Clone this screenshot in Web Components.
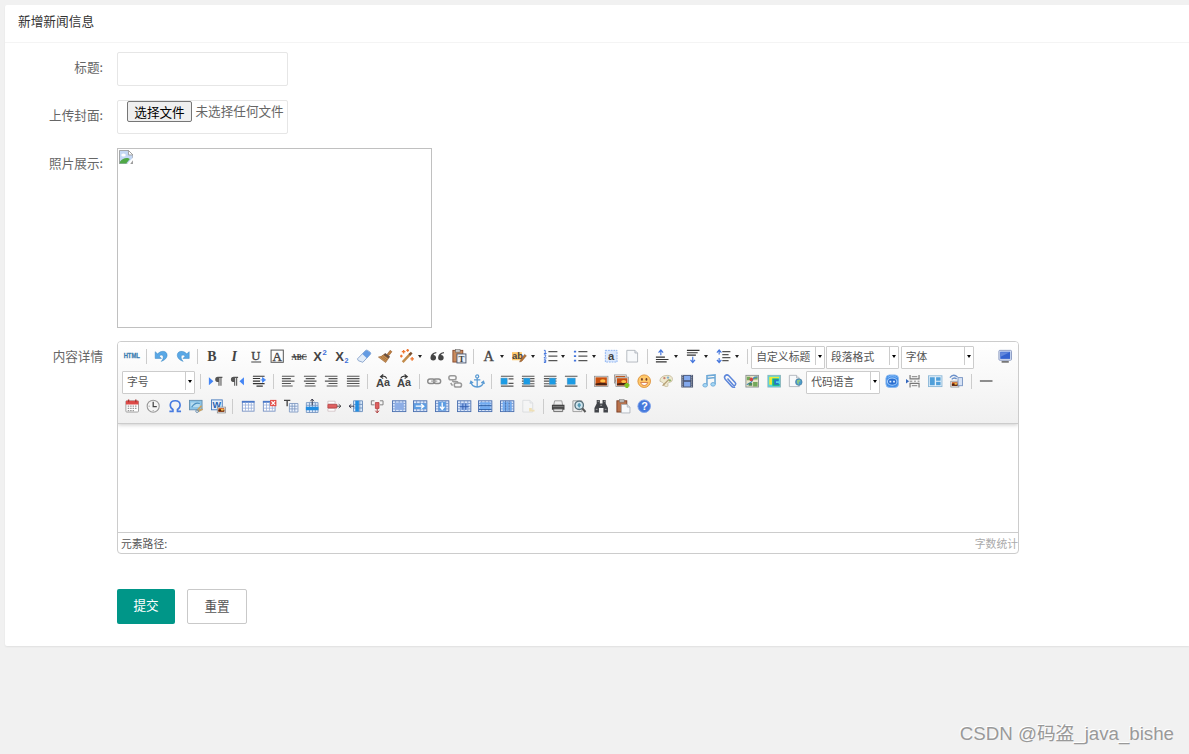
<!DOCTYPE html>
<html lang="zh-CN">
<head>
<meta charset="utf-8">
<title>新增新闻信息</title>
<style>
    html, body {
        margin: 0;
        height: 100%;
        overflow: hidden;
    }

    body {
        background: #f1f1f1;
        color: #666;
        font: 12.6px/20px "Noto Sans CJK SC", sans-serif;
    }
</style>
</head>
<body>
<news-page></news-page>

<script>
// 工具栏图标，全部画在 16x16 的画布上
const lines = (rows, color = '#555') => rows.map(([x, y, w]) => `<path d="M${x} ${y}h${w}" stroke="${color}" stroke-width="1.3"/>`).join('');
const letter = (t, x, y, size, extra = '') => `<text x="${x}" y="${y}" font-size="${size}" fill="#444" ${extra}>${t}</text>`;
const serif = 'font-family="Liberation Serif" font-weight="bold"';
const thin = 'font-family="Liberation Serif" stroke="#444" stroke-width=".4"';
const sans = 'font-family="Liberation Sans" font-weight="bold"';
const grid = (fill = '#fff', head = '#4a79c9') => `
    <rect x="1.5" y="2.5" width="13" height="11" fill="${fill}" stroke="#7590c2"/>
    <path d="M1 3.2h14" stroke="${head}" stroke-width="2"/>
    <path d="M2 6.7h12M2 10.2h12M5 4v9M8.3 4v9M11.5 4v9" stroke="#8fa9d8" stroke-width=".8"/>`;
const cells = inner => `
    <rect x=".6" y="2" width="14.8" height="12" fill="#d9e6fa" stroke="#4a6fae" stroke-width="1"/>
    <path d="M1 5h14M1 8h14M1 11h14M4 2v12M8 2v12M12 2v12" stroke="#6588c4" stroke-width=".8"/>${inner}`;
const photo = (x, y, w, h) => `
    <rect x="${x}" y="${y}" width="${w}" height="${h}" fill="#eee" stroke="#888" stroke-width=".8"/>
    <rect x="${x + 1.2}" y="${y + 1.2}" width="${w - 2.4}" height="${h - 2.4}" fill="#c9500f"/>
    <path d="M${x + 1.2} ${y + h - 1.5}v-2l${w / 2} -1l${w / 2 - 2.4} 1v2z" fill="#4c2213"/>
    <ellipse cx="${x + w * .62}" cy="${y + h * .45}" rx="${w * .2}" ry="${h * .16}" fill="#ffc04a"/>`;
const float = (x, w, rows) => `${lines(rows)}<rect x="${x}" y="4.500" width="${w}" height="7" fill="#1b9be4" stroke="#6b9bb8" stroke-width=".5"/>`;
const sheet = (x, y, w, h) => `<path d="M${x} ${y}h${w - 3}l3 3v${h - 3}h-${w}z" fill="#f7f9fb" stroke="#a7adb5" stroke-width=".9"/><path d="M${x + w - 3} ${y}v3h3" fill="#dce2e8" stroke="#a7adb5" stroke-width=".8"/>`;

const ICONS = {
    html: `<text x="-1.5" y="10.4" font-size="7" fill="#3e7fb1" stroke="#3e7fb1" stroke-width=".3" ${sans} textLength="18" lengthAdjust="spacingAndGlyphs">HTML</text>`,
    undo: `<path d="M1.3 3v7.5h7L5.9 8c1.7-2 4.4-1.4 4.4 1 0 1.8-.9 3.3-2.3 4.8 4.4-1.4 6.6-4.2 6.6-6.8C14.6 2 8.1 1 4 5.4z" fill="#5aa8e6" stroke="#2f7fbe" stroke-width=".5"/>`,
    redo: `<path d="M14.7 3v7.5h-7L10.1 8c-1.7-2-4.4-1.4-4.4 1 0 1.8.9 3.3 2.3 4.8C3.6 12.4 1.4 9.6 1.4 7 1.4 2 7.9 1 12 5.4z" fill="#5aa8e6" stroke="#2f7fbe" stroke-width=".5"/>`,
    bold: letter('B', 2.6, 13, 15.5, serif),
    italic: letter('I', 5, 13, 15.5, `${serif} font-style="italic"`),
    underline: letter('U', 2.6, 12, 14, thin) + '<path d="M2.5 14.5h11" stroke="#444" stroke-width="1.2"/>',
    fontborder: '<rect x="1.2" y="1.2" width="13.6" height="13.6" fill="none" stroke="#555" stroke-width="1.1"/>' + letter('A', 2.8, 13, 14.5, thin),
    strike: `<text x="-.5" y="12" font-size="10" fill="#444" ${serif} textLength="17" lengthAdjust="spacingAndGlyphs">ABC</text><path d="M-.5 8.7h17" stroke="#333" stroke-width="1.2"/>`,
    sup: letter('X', .2, 13, 14.5, sans) + '<text x="10.5" y="6.8" font-size="8.5" fill="#3b6fd8" font-family="Liberation Sans" font-weight="bold">2</text>',
    sub: letter('X', .2, 13, 14.5, sans) + '<text x="10.5" y="15.5" font-size="8" fill="#3b6fd8" font-family="Liberation Sans" font-weight="bold">2</text>',
    eraser: '<path d="M.5 11L9.500 1.700Q10.500.7 12 1.700l2.800 2q1 1 0 2.200L6.500 14.800 1.500 13z" fill="#e3edf9" stroke="#86a2cb"/><path d="M6 5.500L9.700 1.800q.8-.7 2 .1l3 2.100q1 .8 0 2L11 10.200z" fill="#649be2"/>',
    broom: '<path d="M10 6l3.500-4.500 2 1.500L12 7.500z" fill="#c18140" stroke="#8d5427" stroke-width=".6"/><path d="M8 4.500l5.500 4-2 2.300L5.500 7z" fill="#6a5140"/><path d="M6 6.500l5.500 4L8.500 15 .5 9q3.500-.3 5.500-2.500z" fill="#c89255" stroke="#955b28" stroke-width=".7"/><path d="M3.500 9l5 4M5 8l5 4" stroke="#8d5427" stroke-width=".6"/>',
    wand: '<path d="M3 14.500l8.500-9" stroke="#c28b4a" stroke-width="2.800"/><path d="M10.500 6.500L13 4" stroke="#78502f" stroke-width="2.800"/><path d="M4 1v4M2 3h4M13.500 9v4M11.500 11h4M1.500 6.500v3M0 8h3M8.500 0v3M7 1.500h3" stroke="#ef7630" stroke-width="1.500"/>',
    quote: '<path d="M7 3.300Q.5 4.500.5 9.700a3.100 3.100 0 1 0 3.200-3.100Q4.300 5.200 7 4.800zM15.500 3.300Q9 4.500 9 9.700a3.100 3.100 0 1 0 3.200-3.100q.6-1.400 3.300-1.800z" fill="#444"/>',
    pastetext: '<rect x="1" y="1.500" width="11" height="13" fill="#c98a5c" stroke="#85492d"/><rect x="4" y=".5" width="5" height="3" fill="#ccc" stroke="#666" stroke-width=".6"/><rect x="5.500" y="5.500" width="10" height="10" fill="#edf1f7" stroke="#47546b"/>' + letter('T', 7.2, 14.2, 10, serif),
    color: letter('A', 1.6, 13, 16, thin),
    highlight: '<rect x="0" y="3.500" width="11" height="9" fill="#ffc968"/>' + letter('ab', 0, 11.5, 10.5, sans) + '<path d="M9 13l5-7 2 1.500-5 6-2.500 1z" fill="#ba7532" stroke="#764628" stroke-width=".5"/>',
    ol: lines([[6, 3, 10], [6, 8, 10], [6, 13, 10]]) + '<path d="M1 1.500h1.500V5M1 5h3M1 6.500h2V8L1 10h3M1 12h2v3H1M1 13.500h2" stroke="#4475dc" fill="none" stroke-width="1.100"/>',
    ul: lines([[6, 3, 10], [6, 8, 10], [6, 13, 10]]) + '<path d="M1 2h2.500v2H1zM1 7h2.500v2H1zM1 12h2.500v2H1z" fill="#4475dc"/>',
    selectall: '<rect x="1.500" y="1.500" width="13" height="13" fill="#dce9fd" stroke="#87aff0" stroke-dasharray="2 1"/>' + letter('a', 4.5, 12, 12.5, sans),
    clear: sheet(2, 1.5, 12, 13),
    rowtop: lines([[1, 9, 10], [1, 11.7, 14], [1, 14.4, 12]], '#333') + '<path d="M6.500 7V1M4 4l2.500-3L9 4" fill="none" stroke="#4475dc" stroke-width="1.300"/>',
    rowbottom: lines([[1, 1.5, 14], [1, 4.2, 12], [1, 6.9, 10]], '#333') + '<path d="M7.500 8.500v6M5 12l2.500 3 2.500-3" fill="none" stroke="#4475dc" stroke-width="1.300"/>',
    lineheight: lines([[7, 3, 9], [7, 6.3, 7], [7, 9.6, 9], [7, 13, 7]]) + '<path d="M3.500 1v5M3.500 10v5M1 4l2.500-3L6 4M1 12l2.500 3L6 12" fill="none" stroke="#4475dc" stroke-width="1.300"/>',
    screen: '<rect x="1" y="1.500" width="14" height="11" rx="1" fill="#dce4f5" stroke="#8796bd"/><rect x="2.500" y="3" width="11" height="8" fill="#3563cf"/><path d="M3 3.500h10l-10 5z" fill="#6388dc"/><path d="M4 14.300h8" stroke="#777" stroke-width="2"/>',
    ltr: '<path d="M1 3.500v9L6 8z" fill="#4385f5"/><path d="M11 3h5v1.500h-1V13h-1.200V4.500h-1V13h-1.200V9Q8 9 8 6t3-3z" fill="#555"/>',
    rtl: '<path d="M15.500 3.500v9L10.500 8z" fill="#4385f5"/><path d="M4 3h5v1.500H8V13H6.800V4.500h-1V13H4.600V9Q1 9 1 6t3-3z" fill="#555"/>',
    indent: lines([[1, 2.5, 13], [1, 5, 8], [1, 8, 8], [1, 10.7, 13], [5, 13.5, 7]], '#333') + '<path d="M9.500 6.600H12M11.700 4v5.200L15 6.600z" fill="#4385f5" stroke="#4385f5"/>',
    left: lines([[1, 2.5, 14], [1, 5.2, 10], [1, 7.9, 14], [1, 10.6, 10], [1, 13.3, 12]]),
    center: lines([[1, 2.5, 14], [3, 5.2, 10], [1, 7.9, 14], [3, 10.6, 10], [2, 13.3, 12]]),
    right: lines([[1, 2.5, 14], [5, 5.2, 10], [1, 7.9, 14], [5, 10.6, 10], [3, 13.3, 12]]),
    justify: lines([[1, 2.5, 14], [1, 5.2, 14], [1, 7.9, 14], [1, 10.6, 14], [1, 13.3, 14]]),
    upper: letter('A', 0, 15, 12.5, sans) + letter('a', 9, 13, 12, sans) + '<path d="M12 5Q10 1 5.500 3M8 .5L5 3l3 2" fill="none" stroke="#333" stroke-width="1.200"/>',
    lower: letter('A', 0, 15, 12.5, sans) + letter('a', 9, 13, 12, sans) + '<path d="M4 5Q6 1 11 3M8.500 .5l3 2.500-3 2" fill="none" stroke="#333" stroke-width="1.200"/>',
    link: '<rect x=".8" y="5.500" width="8" height="5" rx="2.500" fill="none" stroke="#8b8b8b" stroke-width="1.600"/><rect x="7.200" y="5.500" width="8" height="5" rx="2.500" fill="none" stroke="#8b8b8b" stroke-width="1.600"/><path d="M4.500 8h7" stroke="#aaa" stroke-width="1.500"/>',
    unlink: '<g fill="none" stroke="#999" stroke-width="1.700"><rect x="1" y="2" width="8" height="4.500" rx="2"/><rect x="7" y="10" width="8" height="4.500" rx="2"/><path d="M5 7q0 2 3 1.500t3 1.500M3 10l2 3"/></g>',
    anchor: '<g fill="none" stroke="#5b9bd3" stroke-width="1.400"><circle cx="8" cy="2.700" r="1.700"/><path d="M8 4.500V14M4.500 6.500h7M1 8.500q.5 5.500 7 6 6.500-.5 7-6M0 11l1-3 2.500 2M16 11l-1-3-2.500 2"/></g>',
    floatnone: float(1, 7, [[1, 2.5, 14], [9.5, 5.5, 5.5], [9.5, 10.5, 5.5], [1, 13.5, 14]]),
    floatleft: float(3, 7, [[1, 2.5, 14], [1, 5.2, 14], [1, 8, 14], [1, 10.8, 14], [1, 13.5, 14]]),
    floatright: float(7, 7, [[1, 2.5, 14], [1, 5.2, 14], [1, 8, 14], [1, 10.8, 14], [1, 13.5, 14]]),
    floatcenter: float(3.5, 9, [[1, 2.5, 14], [1, 13.5, 14]]),
    image: photo(.5, 2.5, 15, 11.5),
    images: photo(-.5, 1, 13, 9) + photo(1, 3.5, 14, 10.5) + '<path d="M10.500 12.500h5.500M13.200 10v5.500" stroke="#80c425" stroke-width="3"/>',
    emotion: '<circle cx="8" cy="8" r="7" fill="#ffc96b" stroke="#dd8e37"/><ellipse cx="5.500" cy="6" rx="1" ry="1.500" fill="#74412a"/><ellipse cx="10.500" cy="6" rx="1" ry="1.500" fill="#74412a"/><path d="M4 9.500h8q-1 3.300-4 3.300T4 9.500z" fill="#fff" stroke="#cb5f27" stroke-width=".8"/>',
    scrawl: '<path d="M1 8q0-6 8-6.500 6 0 6 4.500 0 3-4 3.500-2 .5-1 3 .5 1.500-2 1.500-3 0-2.500-3Q4 9 1 8z" fill="#eee9cf" stroke="#c8bea2"/><circle cx="6" cy="4.500" r="1.300" fill="#c98272"/><circle cx="10" cy="4" r="1.300" fill="#82afcf"/><circle cx="12" cy="7" r="1.300" fill="#91b46b"/><path d="M4 13l7-7" stroke="#b7a077" stroke-width="1.500"/>',
    video: '<rect x="1.500" y="1" width="13" height="14" fill="#45516d"/><path d="M4.500 2h7v5h-7zM4.500 8.500h7V14h-7z" fill="#83a9ed"/><path d="M3 1.500v13M13 1.500v13" stroke="#eee" stroke-dasharray="1 1.300"/>',
    music: '<path d="M5.500 12V2l9-1v10M5.500 5l9-1" fill="none" stroke="#6da8d6" stroke-width="1.700"/><ellipse cx="3.500" cy="12.500" rx="2.500" ry="2" fill="#a5d7f5" stroke="#6da8d6"/><ellipse cx="12.300" cy="11.500" rx="2.500" ry="2" fill="#a5d7f5" stroke="#6da8d6"/>',
    attach: '<path d="M5 5l6 7q1.500 1.500 2.700.3 1.100-1.200-.2-2.800L6.500 2Q4.500 0 2.500 1.800.8 3.600 2.500 5.800L9 13q2 2.500 4.500 1.500" fill="none" stroke="#5c86da" stroke-width="1.700"/>',
    map: '<rect x="1" y="1.500" width="14" height="13" fill="#e9e6c8" stroke="#8a8f91"/><path d="M2 3h4v4H2zM9 9h5v5H9zM10 3h4v3h-4z" fill="#75a85c"/><path d="M2 12l5-3 3-5 4-1" fill="none" stroke="#488ac0" stroke-width="1.300"/><circle cx="7" cy="6" r="2" fill="#d24444"/><path d="M4 10h4v3H4z" fill="#4f8759"/>',
    gmap: '<rect x="1" y="1.500" width="14" height="13" fill="#53d4e6" stroke="#8cb5bb"/><path d="M2.500 3h11v2h-8v7h-3z" fill="#f2ea35"/><path d="M6 5h7v2H9v4h5v2H6z" fill="#19b86d"/><path d="M8 6h5v2h-3v2h3v2H8z" fill="#2377cd"/>',
    frame: sheet(1.5, 1.5, 11, 12.5) + '<circle cx="12" cy="9" r="3.700" fill="#4b9bce" stroke="#456f8c" stroke-width=".6"/><path d="M10 7l3-1 1 2-2 1v3l-2-2z" fill="#8dc784"/>',
    webapp: '<rect x="1" y="1" width="14" height="14" rx="4" fill="#448ee6" stroke="#8bbaf0"/><ellipse cx="8" cy="8.500" rx="5.300" ry="4" fill="#2b6fd0" stroke="#a9d0fb" stroke-width="1.200"/><path d="M5 7.500h2v2H5zM9 7.500h2v2H9z" fill="#e4f2ff"/><path d="M3 4q5-4 10 0" fill="none" stroke="#8ac0fb"/>',
    pagebreak: '<path d="M4.500 1v4.500h10V1M4.500 15v-4.500h10V15" fill="#f7f7f7" stroke="#777" stroke-width="1.300"/><path d="M6.500 3h6M6.500 13h6M4 8h3M9 8h2M13 8h2" stroke="#777"/><path d="M0 5.500v5L3.500 8z" fill="#3568bd"/>',
    template: '<rect x=".5" y="2" width="15" height="12" fill="#e7f2fb" stroke="#8ab6d6"/><path d="M2 3.500h5.500v9H2zM9 3.500h5v4H9zM9 8.700h5v3.800H9z" fill="#509fd9"/>',
    background: photo(2, 8, 9, 6.5) + '<rect x="10" y="4" width="5" height="9" fill="#d6e2f5" stroke="#7894c3"/><path d="M1 4q4-5 8.500-.5M3 6q2.500-3 5.500-.5" fill="none" stroke="#6c91ca" stroke-width="1.500"/>',
    hr: '<path d="M1 7.700h14" stroke="#222" stroke-width="1.200"/>',
    date: '<rect x="1" y="2" width="14" height="12.500" rx="1" fill="#fff" stroke="#999"/><path d="M1 2h14v4H1z" fill="#dd4b48"/><path d="M4 .5v3M12 .5v3" stroke="#a33" stroke-width="1.500"/><path d="M3 8h10M3 10.500h10M3 13h7" stroke="#999" stroke-width="1.300" stroke-dasharray="1.700 1"/>',
    time: '<circle cx="8" cy="8" r="6.700" fill="#f4f4f4" stroke="#999" stroke-width="1.200"/><path d="M8 3v5.500h4" fill="none" stroke="#444" stroke-width="1.400"/><path d="M3 8h1M8 12.500v1" stroke="#777"/>',
    special: '<path d="M1.500 13.700h4v-2Q2.500 10 2.500 6.700 2.800 2 8 2t5.500 4.700q0 3.300-3 5v2h4" fill="none" stroke="#477be0" stroke-width="1.800"/>',
    snap: '<rect x=".5" y="1.500" width="14" height="10.500" fill="#8cc4e6" stroke="#628eaf"/><path d="M2 4h10v5H2z" fill="#b5dcf0"/><path d="M3 9q4-6 9-4" fill="none" stroke="#4d90bf" stroke-width="1.300"/><path d="M9 12.500l5-5M10 14l5-3" stroke="#caa261" stroke-width="1.900"/><circle cx="9" cy="13.500" r="1.500" fill="none" stroke="#658baf"/>',
    word: '<rect x=".5" y="1" width="12" height="11" fill="#e5effc" stroke="#4378bd"/><text x="1.700" y="10" font-size="10" fill="#275faf" font-family="Liberation Sans" font-weight="bold">W</text>' + photo(7, 9, 9, 6.5),
    table: grid(),
    deltable: grid() + '<rect x="9" y="1" width="7" height="7" fill="#e34b45"/><path d="M10.500 2.500l4 4m0-4l-4 4" stroke="#fff" stroke-width="1.300"/>',
    rowtitle: '<path d="M0 1.500h7M3.500 1.500V8" stroke="#444" stroke-width="1.500"/><path d="M6 5h9.500v9.500H6zM6 8h9M6 11h9M9 5v9M12 5v9" fill="#edf4ff" stroke="#7893bd" stroke-width=".9"/>',
    insrow: '<path d="M1.500 4h13v11h-13zM5 4v11M8.300 4v11M11.500 4v11M1.500 7h13" fill="#e2edfb" stroke="#6d8ebc" stroke-width=".9"/><path d="M1 8.500h14v4H1z" fill="#218de1"/><path d="M8 7V0M6 2.500L8 0l2 2.500" fill="none" stroke="#334"/>',
    delrow: '<path d="M1 2.500h8v3H1zM1 10.500h8v3H1z" fill="#fff" stroke="#c4b0b2" stroke-width=".7"/><path d="M1 6h10v4H1z" fill="#e06060" stroke="#b94848"/><path d="M11 8h4.500M13 5.800L15.500 8 13 10.200" fill="none" stroke="#444"/>',
    inscol: '<path d="M5 2h10v12H5zM12 2v12M5 6h10M5 10h10" fill="#d8e8fa" stroke="#6d8ebc"/><path d="M7 2h4v12H7z" fill="#218de1"/><path d="M6 8H0M2.500 6L0 8l2.500 2" fill="none" stroke="#334"/>',
    delcol: '<path d="M6 4h4v6.500H6z" fill="#e06060" stroke="#b94848"/><path d="M8 11v4M6 13l2 2.500 2-2.500" fill="none" stroke="#a33"/><path d="M1.500 2v4.500H5M14.500 2v4.500H11M1.500 2H5M11 2h3.500" fill="none" stroke="#777"/>',
    merge: cells('<rect x="3" y="4" width="10" height="8" fill="#8daee6"/>'),
    mergeright: cells('<path d="M1 5h14v6H1z" fill="#5c9de3"/><path d="M3 8h8M9 5.500L12 8l-3 2.500" fill="none" stroke="#fff" stroke-width="1.500"/>'),
    mergedown: cells('<path d="M4 3h8v10H4z" fill="#5c9de3"/><path d="M8 4v7M5.500 8.500L8 11.500l2.500-3" fill="none" stroke="#fff" stroke-width="1.500"/>'),
    split: cells('<path d="M3.500 5h9v7h-9z" fill="#8dafe8"/><path d="M3 8.500h10M6.500 5v7M9.700 5v7" stroke="#315cae"/>'),
    splitrow: cells('<path d="M2 3.500h12v3H2zM2 8h12v3H2z" fill="#70aaf0"/><path d="M1 7.300h14M1 11.700h14" stroke="#285da6"/>'),
    splitcol: cells('<path d="M3 3h2.500v10H3zM7 3h2.500v10H7zM11 3h2v10h-2z" fill="#70aaf0"/><path d="M6.200 2v12M10.200 2v12" stroke="#285da6" stroke-width=".8"/>'),
    charts: '<g opacity=".35">' + sheet(2, 1.5, 11, 13) + '<path d="M9 10h3v4H9zM12 12h3v2h-3z" fill="#e9bd45"/></g>',
    print: '<path d="M4 2h8l1 5H3z" fill="#eee" stroke="#999"/><path d="M1 6.500h14V12H1z" fill="#444"/><path d="M3 11h10v3H3z" fill="#ddd" stroke="#666"/><path d="M2 8.500h12" stroke="#888"/>',
    preview: '<path d="M1 2h10v12H1z" fill="#eee" stroke="#999"/><circle cx="8" cy="7" r="4.700" fill="#cfe5ef" stroke="#58717b" stroke-width="1.500"/><path d="M6 7q2-5 4 0L8 10z" fill="#569ab3"/><path d="M11.500 10.500l3.500 4" stroke="#555" stroke-width="2.300"/>',
    find: '<path d="M3 1h3.500v4h3V1H13v4l2.500 5v5h-5v-5h-5v5h-5v-5L3 5z" fill="#414449"/><path d="M2 11.500h2M12 11.500h2M4 2.500h1.500M11 2.500h1.500M7 7h2" stroke="#aaa"/>',
    drafts: '<rect x="1" y="2" width="11" height="12.500" fill="#b9714a" stroke="#793e25"/><rect x="4" y=".5" width="5" height="3" fill="#bbb" stroke="#777" stroke-width=".5"/>' + sheet(6, 6, 9.5, 9.5),
    help: '<circle cx="8" cy="8" r="7" fill="#4579dc" stroke="#7fa3ea"/><text x="4.600" y="12.300" font-size="12" fill="#fff" font-family="Liberation Sans" font-weight="bold">?</text>'
};

// 三行工具栏："|" 为分隔线，"+" 结尾带下拉箭头，"=" 开头为下拉框
const TOOLBAR = [
    'html | undo redo | bold italic underline fontborder strike sup sub eraser broom wand+ quote pastetext | color+ highlight+ ol+ ul+ selectall clear | rowtop+ rowbottom+ lineheight+ | =自定义标题 =段落格式 =字体 screen',
    '=字号 | ltr rtl indent | left center right justify | upper lower | link unlink anchor | floatnone floatleft floatright floatcenter | image images emotion scrawl video music attach map gmap frame =代码语言 webapp pagebreak template background | hr',
    'date time special snap word | table deltable rowtitle insrow delrow inscol delcol merge mergeright mergedown split splitrow splitcol charts | print preview find drafts help'
];

class ToolButton extends HTMLElement {
    connectedCallback() {
        const menu = this.hasAttribute('menu');
        this.attachShadow({ mode: 'open' }).innerHTML = `
            <style>
                :host { display: flex; align-items: center; flex: none; width: ${menu ? 30.6 : 21.6}px; height: 18px; }
                svg { flex: none; width: 14.4px; height: 14.4px; margin: 0 3.6px; overflow: visible; }
                i { border: 2.5px solid transparent; border-top: 3px solid #222; border-bottom: 0; margin-left: .5px; }
            </style>
            <svg viewBox="0 0 16 16" fill="none">${ICONS[this.getAttribute('icon')]}</svg>
            ${menu ? '<i></i>' : ''}
        `;
    }
}
customElements.define('tool-button', ToolButton);

class ToolSeparator extends HTMLElement {
    connectedCallback() {
        this.attachShadow({ mode: 'open' }).innerHTML = `
            <style>
                :host { display: block; flex: none; box-sizing: border-box; width: 1px; height: 15px; margin: 0 3.5px; background: #ccc; }
            </style>
        `;
    }
}
customElements.define('tool-separator', ToolSeparator);

class ToolCombo extends HTMLElement {
    connectedCallback() {
        this.attachShadow({ mode: 'open' }).innerHTML = `
            <style>
                :host {
                    display: flex;
                    flex: none;
                    box-sizing: border-box;
                    width: 73.4px;
                    height: 23px;
                    margin: 2px 1.4px 0 0;
                    background: #fff;
                    border: 1px solid #ccc;
                    border-radius: 1px;
                    font-size: 10.8px;
                    line-height: 18px;
                    color: #555;
                }
                span { flex: 1; padding-left: 4px; white-space: nowrap; }
                b { display: flex; align-items: center; justify-content: center; width: 8px; height: 18px; border-left: 1px solid #ccc; }
                i { border: 2.5px solid transparent; border-top: 3px solid #000; border-bottom: 0; margin-top: 1px; }
            </style>
            <span><slot></slot></span><b><i></i></b>
        `;
    }
}
customElements.define('tool-combo', ToolCombo);

class RichEditor extends HTMLElement {
    connectedCallback() {
        const rows = TOOLBAR.map(row => '<div class="row">' + row.split(' ').map(item => {
            if (item === '|') return '<tool-separator></tool-separator>';
            if (item[0] === '=') return `<tool-combo>${item.slice(1)}</tool-combo>`;
            return `<tool-button icon="${item.replace('+', '')}" ${item.endsWith('+') ? 'menu' : ''}></tool-button>`;
        }).join('') + '</div>').join('');

        this.attachShadow({ mode: 'open' }).innerHTML = `
            <style>
                :host {
                    display: flex;
                    flex-direction: column;
                    box-sizing: border-box;
                    width: 902px;
                    height: 213px;
                    border: 1px solid #ccc;
                    border-radius: 4px;
                    overflow: hidden;
                }
                .toolbar {
                    box-sizing: border-box;
                    height: 82px;
                    padding: 2px 2px 0 3px;
                    background: linear-gradient(#fff, #f0f0f0);
                    border-bottom: 1px solid #ccc;
                    box-shadow: 0 1px 4px rgba(0, 0, 0, .2);
                }
                .row { display: flex; align-items: center; height: 25px; }
                .row:nth-child(2) { padding-left: 1px; }
                tool-button[icon="screen"] { margin-left: auto; }
                .area { flex: 1; }
                .status {
                    display: flex;
                    justify-content: space-between;
                    height: 20px;
                    padding-left: 3px;
                    border-top: 1px solid #ccc;
                    font-size: 10.8px;
                    line-height: 21px;
                    color: #555;
                }
                .count { color: #aaa; line-height: 20px; }
            </style>
            <div class="toolbar">${rows}</div>
            <div class="area"></div>
            <div class="status"><span>元素路径:</span><span class="count">字数统计</span></div>
        `;
    }
}
customElements.define('rich-editor', RichEditor);

class FormRow extends HTMLElement {
    connectedCallback() {
        this.attachShadow({ mode: 'open' }).innerHTML = `
            <style>
                :host { display: flex; gap: 14px; margin-bottom: 14px; }
                label { width: 98px; padding-top: 5px; text-align: right; white-space: nowrap; }
                .content { display: flex; gap: 12px; }
            </style>
            <label>${this.getAttribute('label') || ''}</label>
            <div class="content"><slot></slot></div>
        `;
    }
}
customElements.define('form-row', FormRow);

class FormButton extends HTMLElement {
    connectedCallback() {
        this.attachShadow({ mode: 'open' }).innerHTML = `
            <style>
                :host {
                    display: block;
                    box-sizing: border-box;
                    width: 58px;
                    height: 35px;
                    border-radius: 2px;
                    background: #009688;
                    color: #fff;
                    line-height: 32px;
                    text-align: center;
                }
                :host([plain]) { width: 60px; background: #fff; border: 1px solid #c9c9c9; color: #555; }
            </style>
            <slot></slot>
        `;
    }
}
customElements.define('form-button', FormButton);

class FileField extends HTMLElement {
    connectedCallback() {
        this.attachShadow({ mode: 'open' }).innerHTML = `
            <style>
                :host { display: flex; align-items: flex-start; gap: 3.5px; padding-left: 9px; white-space: nowrap; }
                button {
                    box-sizing: border-box;
                    width: 65px;
                    height: 21px;
                    padding: 0;
                    border: 1px solid #767676;
                    border-radius: 2px;
                    background: #efefef;
                    color: #000;
                    font: inherit;
                    line-height: 18px;
                }
                span { line-height: 20px; }
            </style>
            <button>选择文件</button><span>未选择任何文件</span>
        `;
    }
}
customElements.define('file-field', FileField);

class NewsPage extends HTMLElement {
    connectedCallback() {
        this.attachShadow({ mode: 'open' }).innerHTML = `
            <style>
                :host { display: block; padding: 5px 0 0 5px; }
                .card {
                    height: 641px;
                    background: #fff;
                    border-radius: 2px 0 0 2px;
                    box-shadow: 0 1px 2px rgba(0, 0, 0, .07);
                }
                header { height: 37px; padding-left: 13px; border-bottom: 1px solid #f4f4f4; color: #333; font-size: 12.7px; line-height: 32px; }
                .form { padding-top: 9px; }
                .box { box-sizing: border-box; width: 171px; height: 34px; border: 1px solid #e6e6e6; border-radius: 2px; }
                .picture { box-sizing: border-box; width: 315px; height: 180px; padding: 1px; border: 1px solid #c0c0c0; }
                .picture svg { display: block; }
                .photo { margin-bottom: 13px; }
                .editor { margin-bottom: 35px; }
                .mark {
                    position: absolute;
                    right: 15px;
                    bottom: 5px;
                    color: #999;
                    font: 18.7px/30px "Liberation Sans", "Noto Sans CJK SC", sans-serif;
                    text-shadow: -1px -1px 0 #fff;
                    white-space: nowrap;
                }
            </style>
            <section class="card">
                <header>新增新闻信息</header>
                <div class="form">
                    <form-row label="标题:"><div class="box"></div></form-row>
                    <form-row label="上传封面:"><file-field class="box"></file-field></form-row>
                    <form-row class="photo" label="照片展示:">
                        <div class="picture">
                            <svg width="14.400" height="14.400" viewBox="0 0 16 16">
                                <path d="M.5.500h10l5 5v5l-5 5H.500z" fill="#c3d7f4" stroke="#9a9a9a"/>
                                <path d="M10.500.500v5h5z" fill="#fff" stroke="#9a9a9a"/>
                                <ellipse cx="5" cy="5.500" rx="2.500" ry="1.700" fill="#fff"/>
                                <path d="M1 15v-2q4-5 9-4l2 1-4 5z" fill="#4fa846"/>
                                <path d="M8.500 16l7.500-8v3l-3.500 5z" fill="#fff"/>
                                <path d="M12.500 15.500h3v-4z" fill="#9a9a9a"/>
                            </svg>
                        </div>
                    </form-row>
                    <form-row class="editor" label="内容详情"><rich-editor></rich-editor></form-row>
                    <form-row><form-button>提交</form-button><form-button plain>重置</form-button></form-row>
                </div>
            </section>
            <div class="mark">CSDN @码盗_java_bishe</div>
        `;
    }
}
customElements.define('news-page', NewsPage);
</script>
</body>
</html>
